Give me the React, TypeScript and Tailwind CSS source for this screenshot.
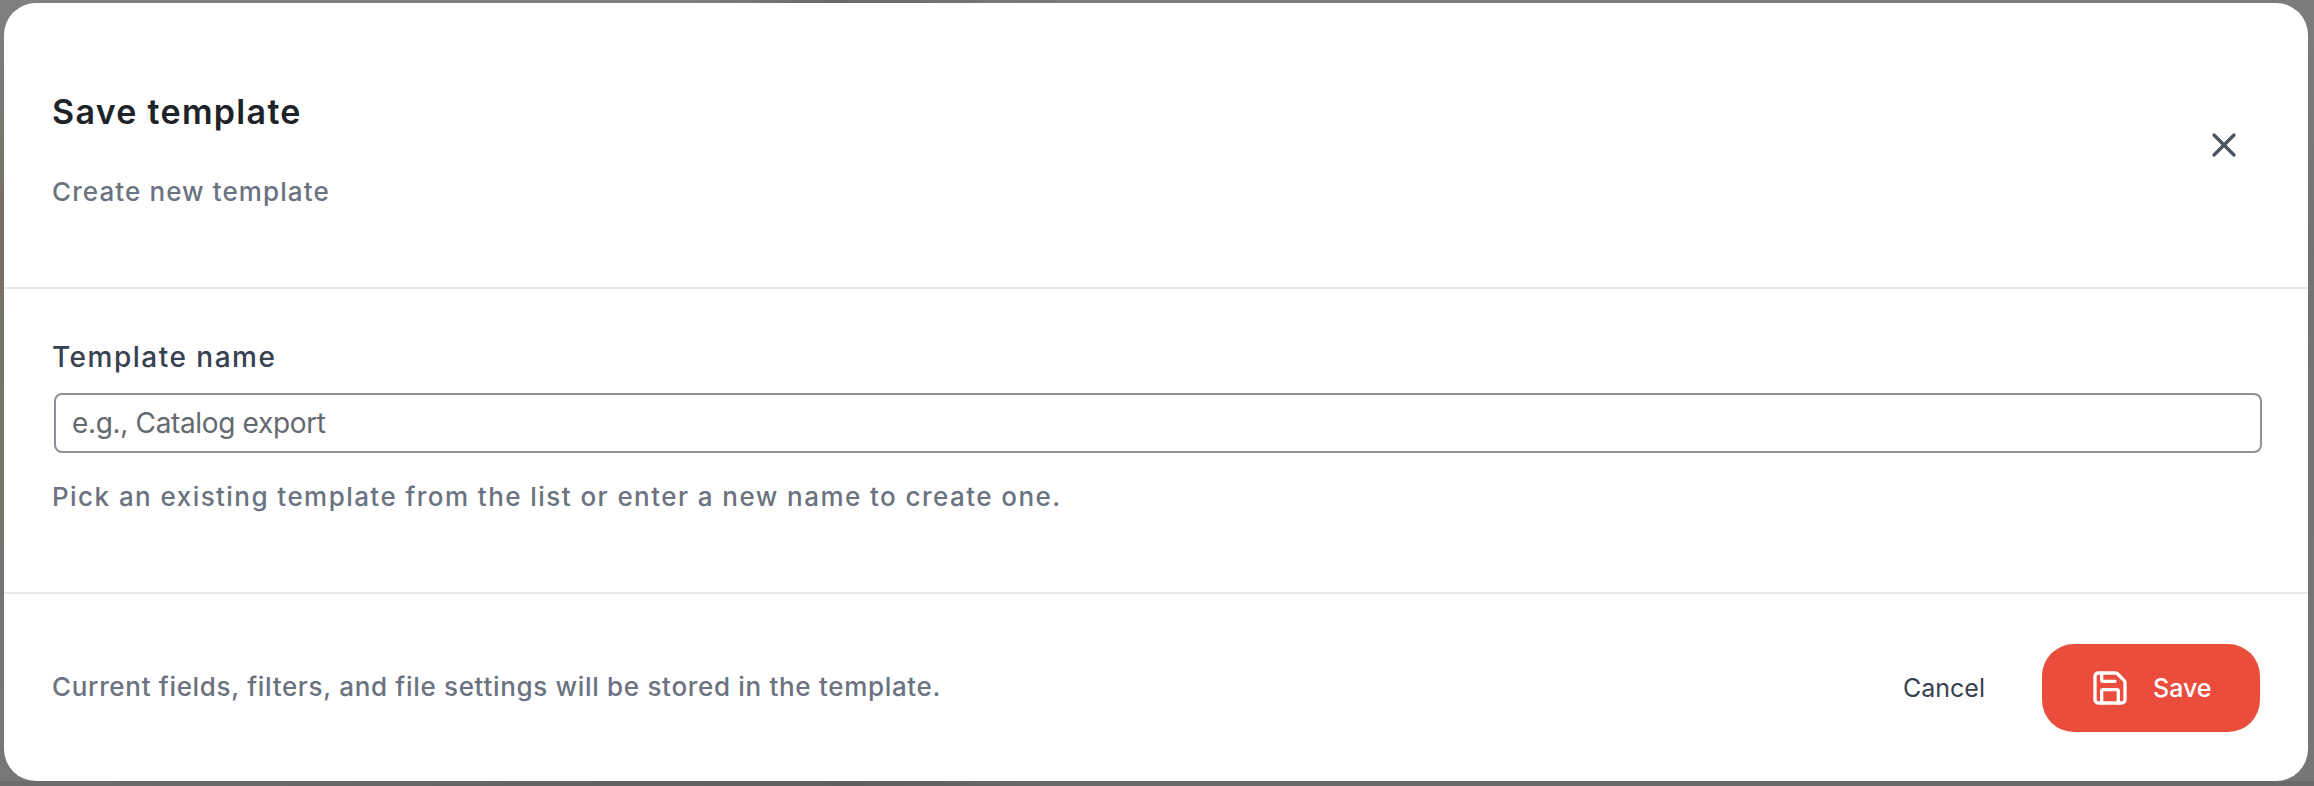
import { Save, X } from "lucide-react";

const hintText = "text-[26px] leading-10 font-medium text-[#6b7280]";

// dimmed page that shows around the dialog, one strip per edge
const Backdrop = () => (
  <div aria-hidden className="absolute inset-0 flex flex-col bg-[#7a7a7a]">
    <div className="h-4 bg-linear-to-r from-[#808080] from-30% via-[#6a686a] via-36% to-[#7b7d7b] to-46%" />
    <div className="flex flex-1 justify-between">
      <div className="w-8 bg-linear-to-b from-[#7f7f7f] via-[#757069] via-25% to-[#777775]" />
      <div className="w-8 bg-linear-to-b from-[#7a7d7a] via-[#707371] via-30% to-[#747775]" />
    </div>
    <div className="h-[5px] bg-linear-to-r from-[#6c6c6b] via-[#5d5f61] via-37% to-[#686968] to-46%" />
  </div>
);

export default function App() {
  return (
    <div className="relative h-[786px] w-[2314px] overflow-hidden pt-[3px] pl-1 font-['Inter',sans-serif]">
      <Backdrop />

      <div className="relative flex h-[778px] w-[2304px] flex-col rounded-[32px] bg-white">
        <header className="flex h-[286px] items-center justify-between border-b-2 border-[#e5e7eb] px-12">
          <div className="flex flex-col items-start gap-9 pt-2.5">
            <h2 className="text-[34px] leading-[48px] font-semibold tracking-[1.3px] text-[#1d2327]">
              Save template
            </h2>
            <p className={`${hintText} tracking-[1.1px]`}>Create new template</p>
          </div>
          <button aria-label="Close" className="flex size-18 items-center justify-center text-[#4b5563]">
            <X size={40} strokeWidth={2} />
          </button>
        </header>

        <div className="flex h-[305px] flex-col items-start border-b-2 border-[#e5e7eb] px-12 pt-12">
          <label htmlFor="template-name" className="text-[28px] leading-10 font-medium tracking-[1.5px] text-[#374151]">
            Template name
          </label>
          <input
            id="template-name"
            className="mt-4 ml-0.5 h-[60px] w-[2208px] rounded-lg border-2 border-[#8f8f98] px-4 text-[28px] tracking-[-0.34px] placeholder:text-[#646970]"
            placeholder="e.g., Catalog export"
          />
          <p className={`${hintText} mt-6 tracking-[1.44px]`}>
            Pick an existing template from the list or enter a new name to create one.
          </p>
        </div>

        <footer className="flex flex-1 items-center justify-between px-12">
          <p className={`${hintText} -mt-0.5 tracking-[0.68px]`}>
            Current fields, filters, and file settings will be stored in the template.
          </p>
          <div className="flex items-center pt-px">
            <button className="px-[57px] pt-0.5 text-[25px] text-[#374151]">Cancel</button>
            <button className="flex h-[88px] w-[218px] items-center gap-[23px] rounded-[32px] bg-[#eb4d3d] pl-12 text-[25px] font-medium text-white">
              <Save size={40} strokeWidth={2} />
              <span className="pt-0.5">Save</span>
            </button>
          </div>
        </footer>
      </div>
    </div>
  );
}
